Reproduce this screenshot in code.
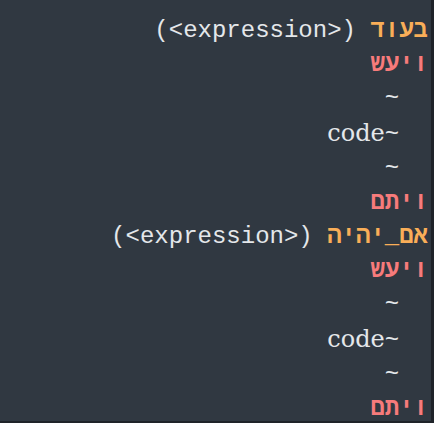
const mono = "font-['Liberation_Mono','DejaVu_Sans_Mono',monospace]"

function Kw({ children, tone }: { children: React.ReactNode; tone: "orange" | "red" }) {
  return (
    <span className={`font-bold ${tone === "orange" ? "text-[#f9ae58]" : "text-[#f77b7b]"}`}>
      {children}
    </span>
  )
}

function CodeLine() {
  return (
    <div className="whitespace-pre">
      {"  ~"}
      <span className="font-['DejaVu_Serif',serif]">code</span>
    </div>
  )
}

function Tilde() {
  return <div className="whitespace-pre">{"  ~"}</div>
}

export default function App() {
  return (
    <div className="h-[423px] w-[434px] bg-[#1f2329] overflow-hidden">
      <div
        dir="rtl"
        className={`h-[421px] w-[431px] bg-[#303841] pt-[14px] pr-[3px] text-[24px] leading-[34px] text-[#e4e7ea] ${mono}`}
      >
        <div className="whitespace-pre">
          <Kw tone="orange">בעוד</Kw> (&lt;expression&gt;)
        </div>
        <div><Kw tone="red">ויעש</Kw></div>
        <Tilde />
        <CodeLine />
        <Tilde />
        <div><Kw tone="red">ויתם</Kw></div>
        <div className="whitespace-pre">
          <Kw tone="orange">אם_יהיה</Kw> (&lt;expression&gt;)
        </div>
        <div><Kw tone="red">ויעש</Kw></div>
        <Tilde />
        <CodeLine />
        <Tilde />
        <div><Kw tone="red">ויתם</Kw></div>
      </div>
    </div>
  )
}
